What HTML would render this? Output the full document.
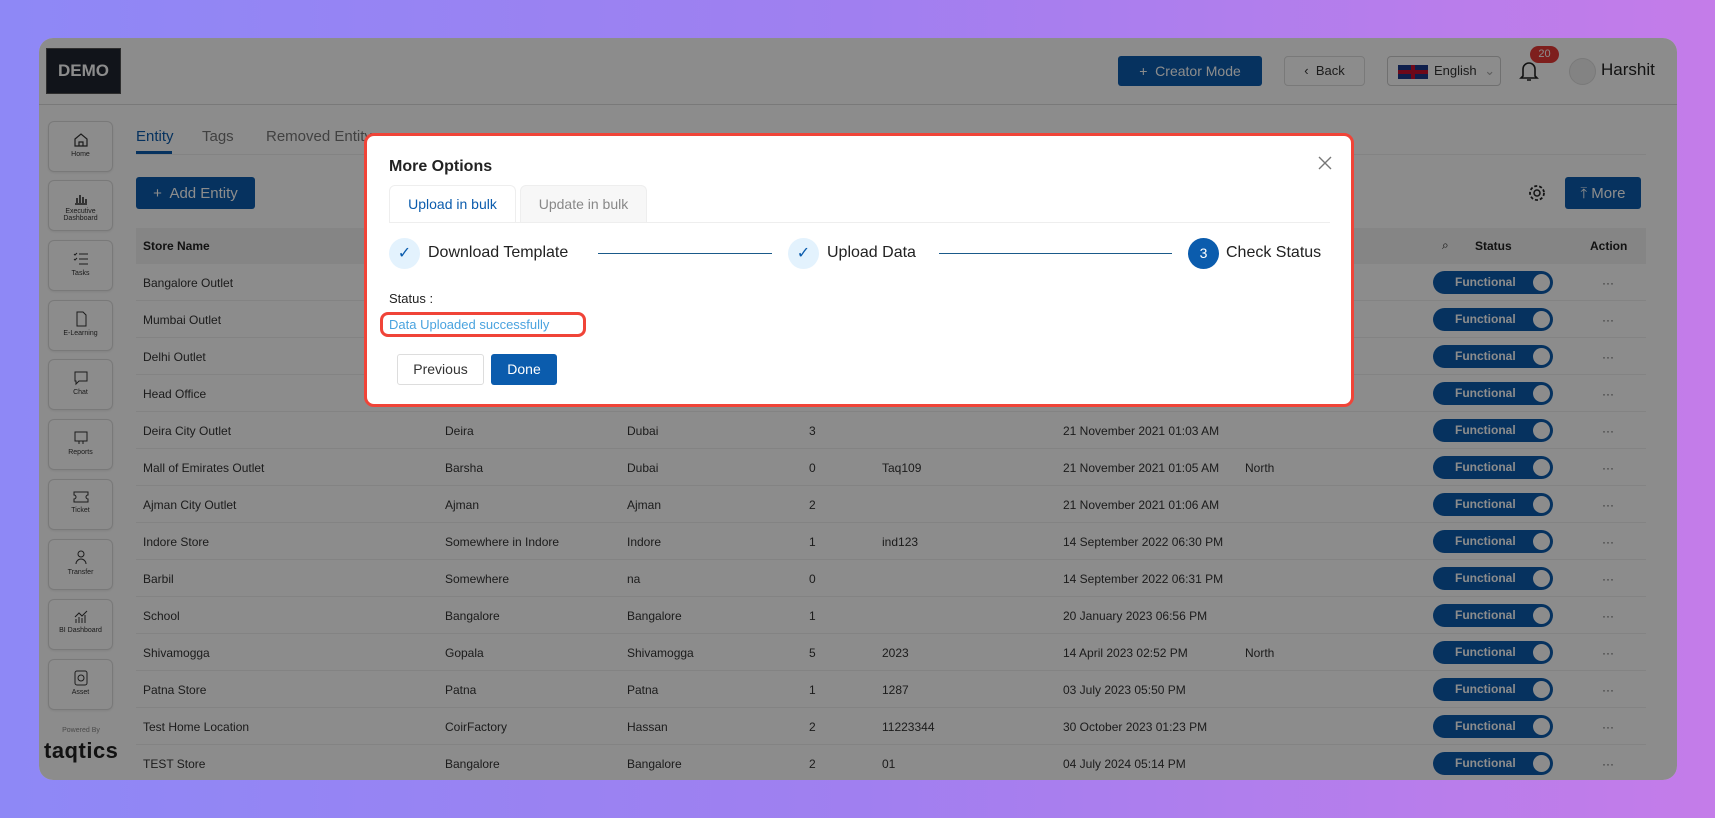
<!DOCTYPE html>
<html><head><meta charset="utf-8"><style>
*{box-sizing:border-box;margin:0;padding:0}
body{width:1715px;height:818px;overflow:hidden;font-family:"Liberation Sans",sans-serif;background:linear-gradient(90deg,#8e88f6 0%,#a07ff0 50%,#c47ce9 100%);position:relative}
.app{position:absolute;left:39px;top:38px;width:1638px;height:742px;background:#fff;border-radius:14px;overflow:hidden}
.ab{position:absolute}
.hdr{position:absolute;left:0;top:0;right:0;height:67px;border-bottom:1px solid #ddd}
.tile{position:absolute;left:9px;width:65px;height:51px;border:1px solid #ddd;border-radius:6px;text-align:center;font-size:7px;color:#333;padding-top:10px;box-shadow:0 1px 2px rgba(0,0,0,.08)}
.tile svg{display:block;margin:0 auto 3px}
.btn{position:absolute;background:#0b5cad;color:#fff;border-radius:3px;font-size:14px;display:flex;align-items:center;justify-content:center}
.row{position:absolute;left:97px;width:1510px;height:37px;border-bottom:1px solid #eee;font-size:12px;color:#333}
.row span{position:absolute;top:12px}
.tg{position:absolute;left:1297px;top:7px;width:120px;height:23px;border-radius:12px;background:#0b5cad;color:#fff;font-size:12px;font-weight:bold}
.tg b{position:absolute;left:22px;top:4px}
.tg i{position:absolute;right:3px;top:3px;width:17px;height:17px;border-radius:50%;background:#fff}
.dots{position:absolute;left:1466px;top:8px;color:#555}
.ov{position:absolute;left:39px;top:38px;width:1638px;height:742px;background:rgba(0,0,0,.45);border-radius:14px}
.modal{position:absolute;left:364px;top:133px;width:990px;height:274px;background:#fff;border:3px solid #f04438;border-radius:10px}
.m{position:absolute}
.ck{position:absolute;width:31px;height:31px;border-radius:50%;background:#e3f2fd;color:#0b5cad;text-align:center;line-height:31px;font-size:16px}
.st{position:absolute;font-size:16px;color:#222}
.ln{position:absolute;height:1px;background:#1a5a8a}
</style></head><body>
<div class="app">
 <div class="hdr">
  <div class="ab" style="left:7px;top:10px;width:75px;height:46px;background:#1f2630;color:#fff;font-weight:bold;font-size:17px;text-align:center;line-height:44px;border:1px solid #555">DEMO</div>
  <div class="btn" style="left:1079px;top:18px;width:144px;height:30px;font-size:14px">+&nbsp; Creator Mode</div>
  <div class="ab" style="left:1245px;top:18px;width:81px;height:30px;border:1px solid #ddd;border-radius:4px;font-size:13px;color:#333;line-height:28px;text-align:center">‹&nbsp; Back</div>
  <div class="ab" style="left:1348px;top:18px;width:114px;height:30px;border:1px solid #ccc;border-radius:4px;font-size:13px;color:#333;line-height:28px;padding-left:46px">English <span style="color:#aaa;margin-left:4px">⌄</span>
   <div class="ab" style="left:10px;top:8px;width:30px;height:14px;background:#1d3a8a"><div class="ab" style="left:0;top:5px;width:30px;height:4px;background:#c8102e"></div><div class="ab" style="left:13px;top:0;width:4px;height:14px;background:#c8102e"></div></div></div>
  <svg class="ab" style="left:1480px;top:21px" width="20" height="24" viewBox="0 0 20 24"><path d="M4 17V10a6 6 0 0 1 12 0v7l2 2H2z M8 21h4" fill="none" stroke="#222" stroke-width="1.6"/></svg>
  <div class="ab" style="left:1491px;top:8px;width:29px;height:17px;background:#e53935;border-radius:9px;color:#fff;font-size:11px;text-align:center;line-height:17px">20</div>
  <div class="ab" style="left:1530px;top:20px;width:27px;height:27px;border-radius:50%;background:#eee;border:1px solid #ddd"></div>
  <div class="ab" style="left:1562px;top:22px;font-size:17px;color:#222">Harshit</div>
 </div>
 <div class="tile" style="top:83px"><svg width="16" height="16" viewBox="0 0 16 16"><path d="M2 7L8 2l6 5v7H2z M6 14v-4h4v4" fill="none" stroke="#333" stroke-width="1.2"/></svg>Home</div>
 <div class="tile" style="top:142px;padding-top:12px"><svg width="14" height="12"><path d="M1 11h12M3 10V5M6 10V2M9 10V4M12 10V6" stroke="#333" stroke-width="1.6"/></svg>Executive Dashboard</div>
 <div class="tile" style="top:202px"><svg width="16" height="16"><path d="M6 3h9M6 8h9M6 13h9M1 3l1 1 2-2M1 8l1 1 2-2" stroke="#333" fill="none"/></svg>Tasks</div>
 <div class="tile" style="top:262px"><svg width="14" height="16"><path d="M3 1h6l3 3v11H3z" stroke="#333" fill="none"/></svg>E-Learning</div>
 <div class="tile" style="top:321px"><svg width="16" height="16"><path d="M2 2h12v9H6l-3 3v-3H2z" stroke="#333" fill="none"/></svg>Chat</div>
 <div class="tile" style="top:381px"><svg width="16" height="16"><path d="M2 2h12v9H2z M6 11v3M10 11v3" stroke="#333" fill="none"/></svg>Reports</div>
 <div class="tile" style="top:441px"><svg width="16" height="14"><path d="M1 2h14v3a2 2 0 0 0 0 4v3H1V9a2 2 0 0 0 0-4z" stroke="#333" fill="none"/></svg>Ticket</div>
 <div class="tile" style="top:501px"><svg width="16" height="16"><circle cx="8" cy="4" r="3" stroke="#333" fill="none"/><path d="M3 14a5 5 0 0 1 10 0" stroke="#333" fill="none"/></svg>Transfer</div>
 <div class="tile" style="top:561px"><svg width="14" height="14"><path d="M2 13V9M5 13V7M8 13V8M11 13V5M1 7l4-4 3 3 5-5" stroke="#333" fill="none"/></svg>BI Dashboard</div>
 <div class="tile" style="top:621px"><svg width="16" height="16"><rect x="2" y="1" width="12" height="14" rx="2" stroke="#333" fill="none"/><circle cx="8" cy="8" r="3" stroke="#333" fill="none"/></svg>Asset</div>
 <div class="ab" style="left:12px;top:689px;width:60px;text-align:center;font-size:7px;color:#888">Powered By</div>
 <div class="ab" style="left:5px;top:700px;font-size:22px;font-weight:bold;color:#222;letter-spacing:.5px">taqtics</div>
 <div class="ab" style="left:97px;top:90px;font-size:15px;color:#0b5cad">Entity</div>
 <div class="ab" style="left:97px;top:113px;width:36px;height:3px;background:#0b5cad"></div>
 <div class="ab" style="left:163px;top:90px;font-size:15px;color:#777">Tags</div>
 <div class="ab" style="left:227px;top:90px;font-size:15px;color:#777">Removed Entity</div>
 <div class="ab" style="left:97px;top:116px;width:1510px;height:1px;background:#eee"></div>
 <div class="btn" style="left:97px;top:139px;width:119px;height:32px;font-size:15px">+&nbsp; Add Entity</div>
 <svg class="ab" style="left:1488px;top:145px" width="20" height="20" viewBox="0 0 20 20"><circle cx="10" cy="10" r="3" fill="none" stroke="#222" stroke-width="1.5"/><circle cx="10" cy="10" r="7" fill="none" stroke="#222" stroke-width="1.8" stroke-dasharray="3 2"/></svg>
 <div class="btn" style="left:1526px;top:139px;width:76px;height:32px;font-size:15px">⤒&nbsp;More</div>
 <div class="ab" style="left:97px;top:190px;width:1510px;height:36px;background:#f2f2f2;font-size:12px;font-weight:bold;color:#222">
  <span class="ab" style="left:7px;top:11px">Store Name</span>
  <span class="ab" style="left:1306px;top:10px;font-weight:normal">⌕</span>
  <span class="ab" style="left:1339px;top:11px">Status</span>
  <span class="ab" style="left:1454px;top:11px">Action</span>
 </div>
 <div class="row" style="top:226px"><span style="left:7px">Bangalore Outlet</span><div class="tg"><b>Functional</b><i></i></div><span class="dots">···</span></div>
 <div class="row" style="top:263px"><span style="left:7px">Mumbai Outlet</span><div class="tg"><b>Functional</b><i></i></div><span class="dots">···</span></div>
 <div class="row" style="top:300px"><span style="left:7px">Delhi Outlet</span><div class="tg"><b>Functional</b><i></i></div><span class="dots">···</span></div>
 <div class="row" style="top:337px"><span style="left:7px">Head Office</span><div class="tg"><b>Functional</b><i></i></div><span class="dots">···</span></div>
 <div class="row" style="top:374px"><span style="left:7px">Deira City Outlet</span><span style="left:309px">Deira</span><span style="left:491px">Dubai</span><span style="left:673px">3</span><span style="left:927px">21 November 2021 01:03 AM</span><div class="tg"><b>Functional</b><i></i></div><span class="dots">···</span></div>
 <div class="row" style="top:411px"><span style="left:7px">Mall of Emirates Outlet</span><span style="left:309px">Barsha</span><span style="left:491px">Dubai</span><span style="left:673px">0</span><span style="left:746px">Taq109</span><span style="left:927px">21 November 2021 01:05 AM</span><span style="left:1109px">North</span><div class="tg"><b>Functional</b><i></i></div><span class="dots">···</span></div>
 <div class="row" style="top:448px"><span style="left:7px">Ajman City Outlet</span><span style="left:309px">Ajman</span><span style="left:491px">Ajman</span><span style="left:673px">2</span><span style="left:927px">21 November 2021 01:06 AM</span><div class="tg"><b>Functional</b><i></i></div><span class="dots">···</span></div>
 <div class="row" style="top:485px"><span style="left:7px">Indore Store</span><span style="left:309px">Somewhere in Indore</span><span style="left:491px">Indore</span><span style="left:673px">1</span><span style="left:746px">ind123</span><span style="left:927px">14 September 2022 06:30 PM</span><div class="tg"><b>Functional</b><i></i></div><span class="dots">···</span></div>
 <div class="row" style="top:522px"><span style="left:7px">Barbil</span><span style="left:309px">Somewhere</span><span style="left:491px">na</span><span style="left:673px">0</span><span style="left:927px">14 September 2022 06:31 PM</span><div class="tg"><b>Functional</b><i></i></div><span class="dots">···</span></div>
 <div class="row" style="top:559px"><span style="left:7px">School</span><span style="left:309px">Bangalore</span><span style="left:491px">Bangalore</span><span style="left:673px">1</span><span style="left:927px">20 January 2023 06:56 PM</span><div class="tg"><b>Functional</b><i></i></div><span class="dots">···</span></div>
 <div class="row" style="top:596px"><span style="left:7px">Shivamogga</span><span style="left:309px">Gopala</span><span style="left:491px">Shivamogga</span><span style="left:673px">5</span><span style="left:746px">2023</span><span style="left:927px">14 April 2023 02:52 PM</span><span style="left:1109px">North</span><div class="tg"><b>Functional</b><i></i></div><span class="dots">···</span></div>
 <div class="row" style="top:633px"><span style="left:7px">Patna Store</span><span style="left:309px">Patna</span><span style="left:491px">Patna</span><span style="left:673px">1</span><span style="left:746px">1287</span><span style="left:927px">03 July 2023 05:50 PM</span><div class="tg"><b>Functional</b><i></i></div><span class="dots">···</span></div>
 <div class="row" style="top:670px"><span style="left:7px">Test Home Location</span><span style="left:309px">CoirFactory</span><span style="left:491px">Hassan</span><span style="left:673px">2</span><span style="left:746px">11223344</span><span style="left:927px">30 October 2023 01:23 PM</span><div class="tg"><b>Functional</b><i></i></div><span class="dots">···</span></div>
 <div class="row" style="top:707px"><span style="left:7px">TEST Store</span><span style="left:309px">Bangalore</span><span style="left:491px">Bangalore</span><span style="left:673px">2</span><span style="left:746px">01</span><span style="left:927px">04 July 2024 05:14 PM</span><div class="tg"><b>Functional</b><i></i></div><span class="dots">···</span></div>
</div>
<div class="ov"></div>
<div class="modal">
 <div class="m" style="left:22px;top:22px;font-size:16px;font-weight:bold;color:#222">More Options</div>
 <svg class="m" style="left:951px;top:20px" width="14" height="14"><path d="M1 1l12 12M13 1L1 13" stroke="#777" stroke-width="1.4"/></svg>
 <div class="m" style="left:22px;top:49px;width:127px;height:38px;border:1px solid #eee;border-bottom:none;border-radius:6px 6px 0 0;background:#fff;color:#0b5cad;font-size:14px;text-align:center;line-height:36px">Upload in bulk</div>
 <div class="m" style="left:153px;top:49px;width:127px;height:37px;border:1px solid #eee;border-bottom:none;border-radius:6px 6px 0 0;background:#f7f7f7;color:#888;font-size:14px;text-align:center;line-height:36px">Update in bulk</div>
 <div class="m" style="left:22px;top:86px;width:941px;height:1px;background:#eee"></div>
 <div class="ck" style="left:22px;top:102px">✓</div><div class="st" style="left:61px;top:108px">Download Template</div>
 <div class="ln" style="left:231px;top:117px;width:174px"></div>
 <div class="ck" style="left:421px;top:102px">✓</div><div class="st" style="left:460px;top:108px">Upload Data</div>
 <div class="ln" style="left:572px;top:117px;width:233px"></div>
 <div class="ck" style="left:821px;top:102px;background:#0b5cad;color:#fff;font-size:14px">3</div><div class="st" style="left:859px;top:108px">Check Status</div>
 <div class="m" style="left:22px;top:155px;font-size:13px;color:#222">Status :</div>
 <div class="m" style="left:13px;top:176px;width:206px;height:25px;border:3px solid #f04438;border-radius:8px"></div>
 <div class="m" style="left:22px;top:181px;font-size:13px;color:#4aa3df">Data Uploaded successfully</div>
 <div class="m" style="left:30px;top:218px;width:87px;height:31px;border:1px solid #ddd;border-radius:3px;font-size:14px;color:#333;text-align:center;line-height:29px">Previous</div>
 <div class="m" style="left:124px;top:218px;width:66px;height:31px;background:#0b5cad;border-radius:3px;font-size:14px;color:#fff;text-align:center;line-height:31px">Done</div>
</div>
</body></html>
